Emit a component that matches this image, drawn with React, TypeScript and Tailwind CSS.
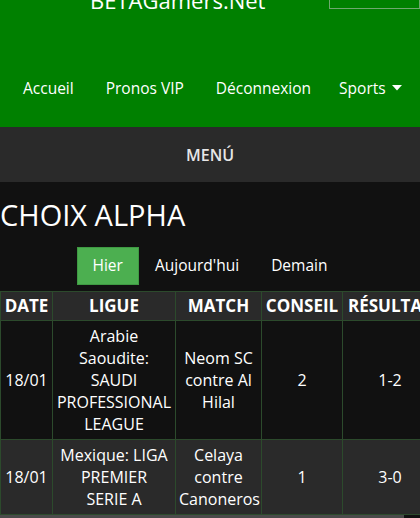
const font = "font-['Open_Sans',sans-serif]";

const rows = [
  {
    date: "18/01",
    league: ["Arabie", "Saoudite:", "SAUDI", "PROFESSIONAL", "LEAGUE"],
    match: "Neom SC contre Al Hilal",
    tip: "2",
    result: "1-2",
    bg: "bg-[#111111]",
  },
  {
    date: "18/01",
    league: ["Mexique: LIGA", "PREMIER", "SERIE A"],
    match: "Celaya contre Canoneros",
    tip: "1",
    result: "3-0",
    bg: "bg-[#2a2a2a]",
  },
];

const cols = [
  { label: "DATE", w: "w-[52px]" },
  { label: "LIGUE", w: "w-[123px]" },
  { label: "MATCH", w: "w-[86px]" },
  { label: "CONSEIL", w: "w-[81px]" },
  { label: "RÉSULTAT", w: "w-[95px]" },
];

function Header() {
  return (
    <div className="flex h-[127px] flex-col bg-[#008000] text-white">
      <div className="mt-[-11px] flex h-[22px] items-start">
        <div className="pl-[90px] text-[22px] leading-[22px]">BETAGamers.Net</div>
        <div className="ml-auto h-[20px] w-[91px] border border-[#6fa86f]" />
      </div>
      <nav className="mt-[67px] flex h-[20px] items-center text-[15.5px] leading-[20px]">
        <a className="ml-[23px]">Accueil</a>
        <a className="ml-[32px]">Pronos VIP</a>
        <a className="ml-[32px]">Déconnexion</a>
        <a className="ml-[28px] flex items-center gap-[6px]">
          Sports
          <svg width="10" height="6" viewBox="0 0 10 6">
            <path d="M0 0h10L5 5.5z" fill="#fff" />
          </svg>
        </a>
      </nav>
    </div>
  );
}

export default function App() {
  return (
    <div className={`min-h-[518px] bg-[#111111] ${font} overflow-hidden`}>
      <Header />
      <div className="flex h-[55px] items-center justify-center bg-[#2a2a2a] text-[16px] font-semibold text-[#e6e6e6]">
        MENÚ
      </div>

      <h1 className="mt-[15px] text-[29px] leading-[35px] text-white">CHOIX ALPHA</h1>

      <div className="mt-[15px] flex justify-center text-[15.5px] text-white">
        <button className="h-[38px] border border-[#3f9a43] bg-[#4caf50] px-[15px]">Hier</button>
        <button className="h-[38px] px-4">Aujourd'hui</button>
        <button className="h-[38px] px-4">Demain</button>
      </div>

      <div className="mt-[6px] overflow-hidden">
        <table className="w-[437px] table-fixed border-collapse text-center text-[16px] leading-[22px] text-white">
          <thead>
            <tr className="bg-[#2a2a2a]">
              {cols.map((c) => (
                <th
                  key={c.label}
                  className={`${c.w} border border-[#2c4a2c] px-[2px] py-[3px] text-[17px] font-bold leading-[22px]`}
                >
                  {c.label}
                </th>
              ))}
            </tr>
          </thead>
          <tbody>
            {rows.map((r, i) => (
              <tr key={i} className={r.bg}>
                <td className="border border-[#2c4a2c] px-[3px] py-[4px]">{r.date}</td>
                <td className="border border-[#2c4a2c] px-[3px] py-[4px]">
                  {r.league.map((l, j) => (
                    <div key={j}>{l}</div>
                  ))}
                </td>
                <td className="border border-[#2c4a2c] px-[3px] py-[4px]">{r.match}</td>
                <td className="border border-[#2c4a2c] px-[3px] py-[4px]">{r.tip}</td>
                <td className="border border-[#2c4a2c] px-[3px] py-[4px]">{r.result}</td>
              </tr>
            ))}
          </tbody>
        </table>
        {/* scrollbar */}
        <div className="h-[4px] w-[404px] bg-[#4a4a4a]" />
      </div>
    </div>
  );
}
